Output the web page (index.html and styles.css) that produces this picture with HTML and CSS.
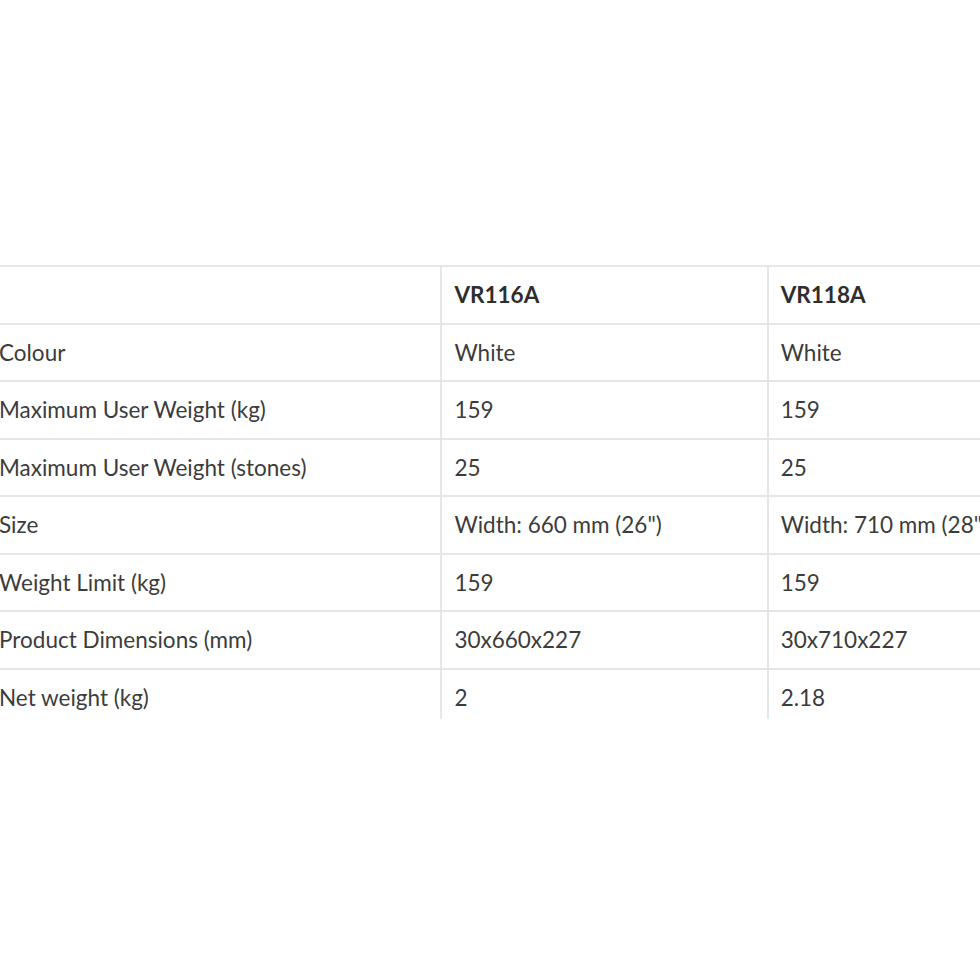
FILE: index.html
```html
<!DOCTYPE html>
<html>
<head>
<meta charset="utf-8">
<link rel="stylesheet" href="styles.css">
</head>
<body>
<div class="frame">
  <table class="specs">
    <colgroup>
      <col class="c-label">
      <col class="c-val">
      <col class="c-val">
    </colgroup>
    <thead>
      <tr><th></th><th>VR116A</th><th>VR118A</th></tr>
    </thead>
    <tbody>
      <tr><td>Colour</td><td>White</td><td>White</td></tr>
      <tr><td>Maximum User Weight (kg)</td><td>159</td><td>159</td></tr>
      <tr><td>Maximum User Weight (stones)</td><td>25</td><td>25</td></tr>
      <tr><td>Size</td><td>Width: 660 mm (26")</td><td>Width: 710 mm (28")</td></tr>
      <tr><td>Weight Limit (kg)</td><td>159</td><td>159</td></tr>
      <tr><td>Product Dimensions (mm)</td><td>30x660x227</td><td>30x710x227</td></tr>
      <tr><td>Net weight (kg)</td><td>2</td><td>2.18</td></tr>
    </tbody>
  </table>
</div>
</body>
</html>
```
FILE: styles.css
```css
html, body {
  margin: 0;
  padding: 0;
  background: #fff;
}
body {
  overflow: hidden;
  font-family: Lato, "Liberation Sans", sans-serif;
  color: #3c3c3c;
}
.frame {
  margin-top: 265px;
  margin-left: -15px;
  height: 454px;
  overflow: hidden;
}
.specs {
  border-collapse: collapse;
  table-layout: fixed;
  width: 1110px;
  font-size: 22.5px;
}
.c-label { width: 455px; }
.c-val { width: 326px; }
.specs th,
.specs td {
  height: 55.5px;
  padding: 0 12px;
  text-align: left;
  vertical-align: middle;
  border: 2px solid #e6e6e6;
  white-space: nowrap;
  overflow: hidden;
}
.specs th {
  font-weight: 700;
  color: #2e2e2e;
}
.specs td {
  font-weight: 400;
}
```
